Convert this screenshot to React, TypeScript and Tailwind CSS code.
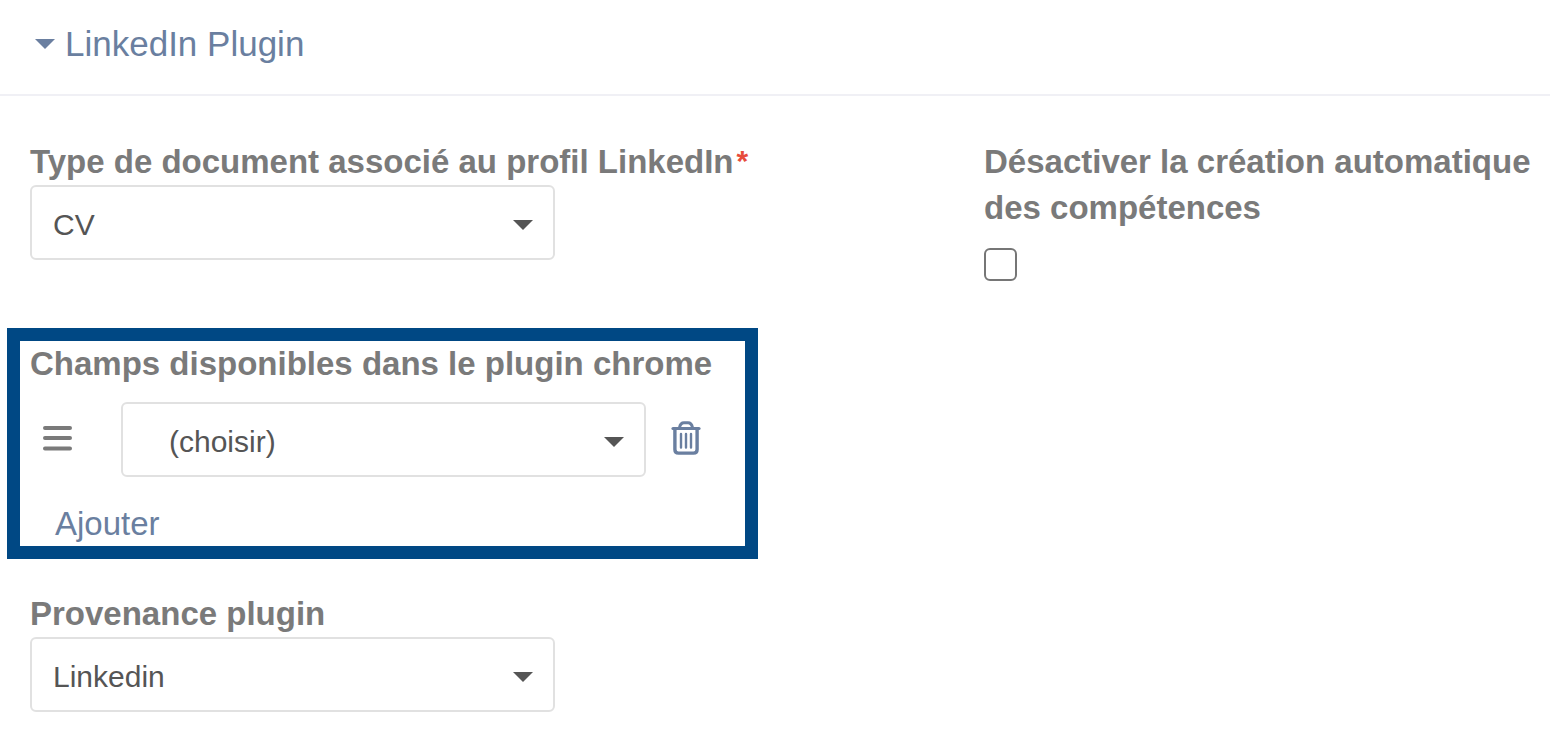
import { clsx } from "clsx";

function Caret({ className }: { className?: string }) {
  return (
    <svg
      viewBox="0 0 20 10"
      className={clsx("w-5 h-[10px] fill-current", className)}
      aria-hidden="true"
    >
      <path d="M0 0h20L10 10z" />
    </svg>
  );
}

function TrashIcon() {
  return (
    <svg
      viewBox="0 0 30 34"
      className="w-[30px] h-[34px]"
      fill="none"
      stroke="currentColor"
      strokeLinecap="round"
      strokeLinejoin="round"
      aria-hidden="true"
    >
      <path d="M2 7.500h26" strokeWidth="3.200" />
      <path d="M8.500 6.500q1-4.800 4.500-4.800h4q3.500 0 4.500 4.800" strokeWidth="3" />
      <path d="M3.900 8V28.500q0 3.600 3.600 3.600h15q3.600 0 3.600-3.600V8" strokeWidth="3.400" />
      <path d="M10 13v13.500M15 13v13.500M20 13v13.500" strokeWidth="2.400" />
    </svg>
  );
}

type SelectProps = {
  id: string;
  value: string;
  indent?: boolean;
};

function Select({ id, value, indent }: SelectProps) {
  return (
    <div className="relative w-[525px] max-w-full">
      <select
        id={id}
        className={clsx(
          "block w-full h-[75px] pt-1 pr-16 appearance-none rounded-md border-2 border-[#e1e1e1] bg-white text-[30px] text-[#555]",
          indent ? "pl-[46px]" : "pl-[21px]"
        )}
      >
        <option>{value}</option>
      </select>
      <Caret className="absolute right-[22px] top-[35px] text-[#555] pointer-events-none" />
    </div>
  );
}

const label = "block text-[33px] leading-[46px] font-bold text-[#7a7a7a]";

export default function App() {
  return (
    <div className="bg-white font-['Liberation_Sans',Arial,sans-serif]">
      <header className="flex border-b-2 border-[#f0f0f5] px-[35px] py-5">
        <button
          type="button"
          aria-expanded="true"
          className="flex items-center gap-[10px] h-[54px] pb-[6px] text-[35px] text-[#6a7fa0]"
        >
          <Caret />
          LinkedIn Plugin
        </button>
      </header>

      <main className="grid grid-cols-[63fr_37fr] pl-[7px] pr-4 pt-[43px] pb-5">
        <div className="flex flex-col items-start">
          <div className="pl-[23px]">
            <label htmlFor="doc-type" className={label}>
              Type de document associé au profil LinkedIn
              <span className="pl-[3px] text-[30px] leading-none align-[2px] text-[#e74c3c]">*</span>
            </label>
            <Select id="doc-type" value="CV" />
          </div>

          <section className="mt-[68px] border-[13px] border-[#004884] pl-[10px] pr-[33px]">
            <label htmlFor="field" className={label}>
              Champs disponibles dans le plugin chrome
            </label>
            <div className="flex items-center pt-[15px]">
              <button type="button" aria-label="Déplacer" className="w-[91px] pl-3 pb-1 text-[#7a7a7a]">
                <svg
                  viewBox="0 0 30 26"
                  className="w-[30px] h-[26px]"
                  stroke="currentColor"
                  strokeWidth="4"
                  strokeLinecap="round"
                  aria-hidden="true"
                >
                  <path d="M3 3h25M3 13h25M3 23.500h25" />
                </svg>
              </button>
              <Select id="field" value="(choisir)" indent />
              <button type="button" aria-label="Supprimer" className="ml-[25px] pb-1 text-[#6a7fa0]">
                <TrashIcon />
              </button>
            </div>
            <a href="#" className="block w-fit mt-6 ml-[25px] text-[33px] leading-[45px] text-[#6a7fa0]">
              Ajouter
            </a>
          </section>

          <div className="pl-[23px] mt-8">
            <label htmlFor="source" className={label}>
              Provenance plugin
            </label>
            <Select id="source" value="Linkedin" />
          </div>
        </div>

        <div className="pl-[15px]">
          <label htmlFor="disable-skills" className={label}>
            Désactiver la création automatique des compétences
          </label>
          <input
            id="disable-skills"
            type="checkbox"
            className="block mt-[17px] size-[33px] appearance-none rounded-md border-2 border-[#767676] bg-white"
          />
        </div>
      </main>
    </div>
  );
}
